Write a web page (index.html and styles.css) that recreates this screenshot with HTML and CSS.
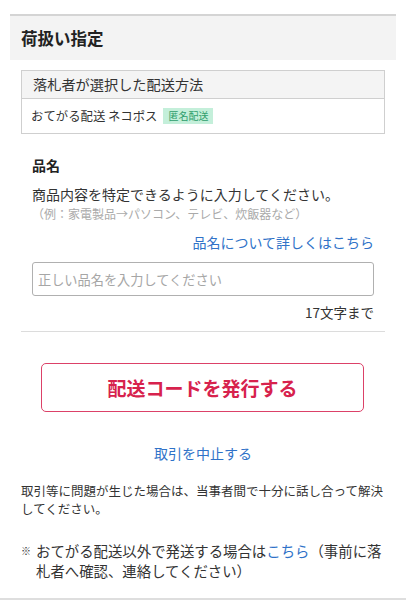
FILE: index.html
```html
<!DOCTYPE html>
<html lang="ja">
<head>
<meta charset="utf-8">
<link rel="stylesheet" href="styles.css">
</head>
<body>
<div class="page">
  <div class="section-head">荷扱い指定</div>
  <div class="content">
    <div class="method-box">
      <div class="method-head">落札者が選択した配送方法</div>
      <div class="method-row">おてがる配送 ネコポス<span class="badge">匿名配送</span></div>
    </div>
    <div class="name-section">
      <div class="name-title">品名</div>
      <div class="name-desc">商品内容を特定できるように入力してください。</div>
      <div class="name-example">（例：家電製品→パソコン、テレビ、炊飯器など）</div>
      <div class="name-link-row"><a class="link">品名について詳しくはこちら</a></div>
      <input class="name-input" type="text" placeholder="正しい品名を入力してください">
      <div class="counter">17文字まで</div>
    </div>
    <button class="issue-btn">配送コードを発行する</button>
    <div class="cancel-row"><a class="link cancel">取引を中止する</a></div>
    <p class="note">取引等に問題が生じた場合は、当事者間で十分に話し合って解決してください。</p>
    <div class="note2"><span class="mark">※</span><p class="note2-text">おてがる配送以外で発送する場合は<a class="link">こちら</a>（事前に落札者へ確認、連絡してください）</p></div>
  </div>
  <div class="bottom-bar"></div>
</div>
</body>
</html>
```

FILE: styles.css
```css
* { box-sizing: border-box; }
html, body { margin: 0; padding: 0; background: #fff; }
body {
  font-family: "Noto Sans CJK JP", "Noto Sans", sans-serif;
  color: #333;
}
.page { padding: 14px 10px 0; }
.section-head {
  border-top: 2px solid #d4d4d4;
  background: #f3f3f3;
  height: 46px;
  line-height: 44px;
  padding-left: 11px;
  font-size: 16.5px;
  font-weight: bold;
  color: #222;
}
.content { padding: 0 11px; }
.method-box {
  margin-top: 10px;
  border: 1px solid #cfcfcf;
}
.method-head {
  height: 28px;
  line-height: 27px;
  padding-left: 11px;
  background: #f4f4f4;
  border-bottom: 1px solid #cfcfcf;
  font-size: 14.2px;
  color: #333;
}
.method-row {
  height: 34px;
  display: flex;
  align-items: center;
  padding-left: 9px;
  font-size: 12.4px;
  color: #333;
}
.badge {
  margin-left: 6px;
  background: #c4efda;
  color: #2f9e6c;
  font-size: 10px;
  line-height: 16px;
  padding: 0 5px;
}
.name-section {
  padding: 0 11px 10px;
  border-bottom: 1px solid #dcdcdc;
}
.name-title {
  margin-top: 21px;
  font-size: 14px;
  font-weight: bold;
  line-height: 20px;
  color: #222;
}
.name-desc {
  margin-top: 9px;
  font-size: 14px;
  line-height: 20px;
}
.name-example {
  margin-top: 2px;
  font-size: 12px;
  line-height: 16px;
  color: #aaa;
}
.name-link-row {
  margin-top: 10px;
  text-align: right;
  font-size: 14px;
  line-height: 20px;
}
.link { color: #2f72c8; text-decoration: none; }
.name-input {
  display: block;
  margin-top: 10px;
  width: 100%;
  height: 34px;
  border: 1px solid #b0b0b0;
  border-radius: 3px;
  padding: 0 5px;
  font-family: inherit;
  font-size: 13.2px;
  color: #333;
  background: #fff;
}
.name-input::placeholder { color: #a6a6a6; }
.counter {
  margin-top: 7px;
  text-align: right;
  font-size: 13.5px;
  line-height: 18px;
  color: #333;
}
.issue-btn {
  display: block;
  width: calc(100% - 41px);
  margin: 31px 0 0 20px;
  height: 49px;
  border: 1px solid #dc4168;
  border-radius: 5px;
  background: #fff;
  color: #d7224d;
  font-family: inherit;
  font-size: 19px;
  font-weight: bold;
}
.cancel-row {
  margin-top: 31px;
  text-align: center;
  font-size: 14px;
  line-height: 20px;
}
.note {
  margin: 19px 0 0;
  font-size: 12.5px;
  line-height: 18px;
  color: #333;
}
.note2 {
  margin-top: 23px;
  display: flex;
  font-size: 14.4px;
  line-height: 20px;
}
.mark {
  flex: 0 0 15px;
  font-size: 10px;
}
.note2-text { flex: 1; margin: 0; }
.bottom-bar {
  margin: 17px -10px 0;
  height: 10px;
  background: #dedede;
}
```
